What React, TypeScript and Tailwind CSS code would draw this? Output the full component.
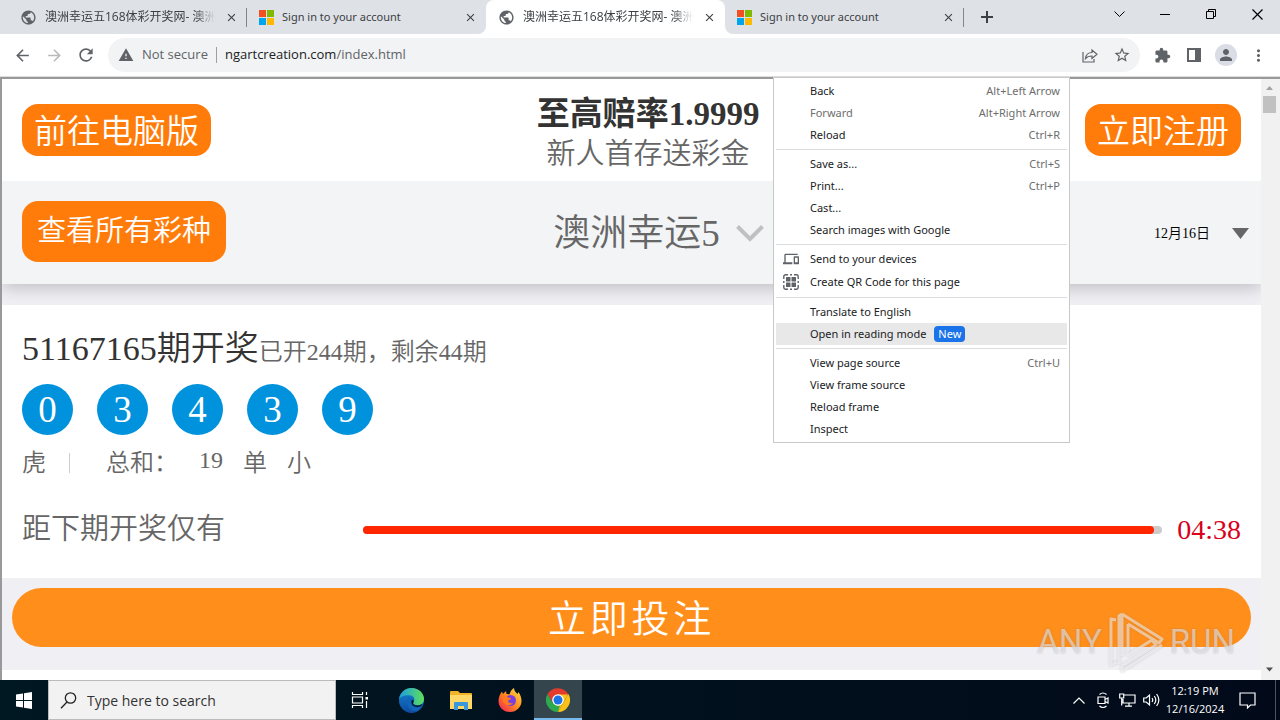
import React from 'react';
import {
  MdArrowBack,
  MdArrowForward,
  MdClose,
  MdDevices,
  MdExtension,
  MdMoreVert,
  MdPerson,
  MdPublic,
  MdRefresh,
  MdStarBorder,
  MdWarning,
} from 'react-icons/md';

type MenuItem = {
  label: string;
  shortcut?: string;
  icon?: React.ReactNode;
  disabled?: boolean;
  active?: boolean;
  badge?: string;
  tall?: boolean;
};

const MicrosoftLogo = () => (
  <svg width="15" height="15" viewBox="0 0 15 15" className="shrink-0">
    <rect width="7" height="7" fill="#f25022" />
    <rect x="8" width="7" height="7" fill="#7fba00" />
    <rect y="8" width="7" height="7" fill="#00a4ef" />
    <rect x="8" y="8" width="7" height="7" fill="#ffb900" />
  </svg>
);

const QrIcon = () => (
  <svg width="16" height="16" viewBox="0 0 16 16" fill="none">
    <path d="M.8 5V2.500A1.700 1.700 0 0 1 2.500.8H5M11 .8h2.500a1.700 1.700 0 0 1 1.700 1.700V5M15.200 11v2.500a1.700 1.700 0 0 1-1.700 1.700H11M5 15.200H2.500A1.700 1.700 0 0 1 .8 13.500V11M.8 7v2M15.200 7v2M7 .8h2M7 15.200h2" stroke="#5f6368" strokeWidth="1.400" />
    <rect x="3" y="3" width="4.500" height="4.500" rx=".5" fill="#5f6368" />
    <rect x="8.500" y="3" width="4.500" height="4.500" rx=".5" fill="#5f6368" />
    <rect x="3" y="8.500" width="4.500" height="4.500" rx=".5" fill="#5f6368" />
    <rect x="8.500" y="8.500" width="4.500" height="4.500" rx=".5" fill="#5f6368" />
  </svg>
);

const tabs = [
  { title: '澳洲幸运五168体彩开奖网- 澳洲', kind: 'site' },
  { title: 'Sign in to your account', kind: 'ms' },
  { title: '澳洲幸运五168体彩开奖网- 澳洲', kind: 'site', active: true },
  { title: 'Sign in to your account', kind: 'ms' },
];

const menuGroups: MenuItem[][] = [
  [
    { label: 'Back', shortcut: 'Alt+Left Arrow' },
    { label: 'Forward', shortcut: 'Alt+Right Arrow', disabled: true },
    { label: 'Reload', shortcut: 'Ctrl+R' },
  ],
  [
    { label: 'Save as...', shortcut: 'Ctrl+S' },
    { label: 'Print...', shortcut: 'Ctrl+P' },
    { label: 'Cast...' },
    { label: 'Search images with Google' },
  ],
  [
    { label: 'Send to your devices', icon: <MdDevices size={16} /> },
    { label: 'Create QR Code for this page', icon: <QrIcon />, tall: true },
  ],
  [
    { label: 'Translate to English' },
    { label: 'Open in reading mode', active: true, badge: 'New' },
  ],
  [
    { label: 'View page source', shortcut: 'Ctrl+U' },
    { label: 'View frame source' },
    { label: 'Reload frame' },
    { label: 'Inspect' },
  ],
];

const balls = [0, 3, 4, 3, 9];

const TabStrip = () => (
  <div className="flex h-[34px] shrink-0 bg-[#dee1e6] pl-2">
    {tabs.map((tab, i) => (
      <div
        key={i}
        className={`relative flex w-[239px] min-w-0 items-center pl-3 pr-2 ${tab.active ? 'rounded-t-lg bg-white' : ''}`}
      >
        {tab.kind === 'site' ? <MdPublic size={17} className="shrink-0 text-[#5f6368]" /> : <MicrosoftLogo />}
        <button
          className={`ml-2 h-6 min-w-0 flex-1 whitespace-nowrap text-left text-[#3c4043] ${tab.kind === 'site' ? 'text-xs [mask-image:linear-gradient(to_right,black_88%,transparent)]' : "font-['Noto_Sans',sans-serif] text-[11px]"}`}
        >
          {tab.title}
        </button>
        <button aria-label="Close tab" className="ml-2 flex size-4 shrink-0 items-center justify-center text-[#3c4043]">
          <MdClose size={13} />
        </button>
        {(i === 0 || i === 3) && <span className="absolute right-0 top-2 h-[19px] w-px bg-[#80868b]" />}
        {tab.active && (
          <>
            <svg width="8" height="8" className="absolute -left-2 bottom-0">
              <path d="M8 0v8H0a8 8 0 0 0 8-8z" fill="#fff" />
            </svg>
            <svg width="8" height="8" className="absolute -right-2 bottom-0">
              <path d="M0 0v8h8a8 8 0 0 1-8-8z" fill="#fff" />
            </svg>
          </>
        )}
      </div>
    ))}
    <button aria-label="New tab" className="flex w-[45px] items-center justify-center">
      <svg width="12" height="12" viewBox="0 0 12 12" stroke="#3c4043" strokeWidth="2">
        <path d="M6 0v12M0 6h12" />
      </svg>
    </button>
    <div className="ml-auto flex h-7 text-black">
      <button aria-label="Search tabs" className="flex w-[46px] items-center justify-center">
        <svg width="11" height="7" viewBox="0 0 11 7" fill="none" stroke="currentColor"><path d="M.5.5l5 5 5-5" /></svg>
      </button>
      <button aria-label="Minimize" className="flex w-[46px] items-center justify-center">
        <svg width="10" height="3" viewBox="0 0 10 3" fill="none" stroke="currentColor"><path d="M0 1.500h10" /></svg>
      </button>
      <button aria-label="Restore" className="flex w-[46px] items-center justify-center">
        <svg width="10" height="10" viewBox="0 0 10 10" fill="none" stroke="currentColor"><path d="M.5 2.500h7v7h-7zM2.500 2.500v-2h7v7h-2" /></svg>
      </button>
      <button aria-label="Close" className="flex w-[46px] items-center justify-center">
        <svg width="11" height="11" viewBox="0 0 11 11" fill="none" stroke="currentColor" strokeWidth="1.200"><path d="M.5.5l10 10M10.500.5l-10 10" /></svg>
      </button>
    </div>
  </div>
);

const Toolbar = () => (
  <div className="flex h-[43px] shrink-0 items-center border-b border-[#dcdcdc] bg-white px-1.5 text-[#5f6368]">
    <button aria-label="Go back" className="flex w-8 justify-center"><MdArrowBack size={19} /></button>
    <button aria-label="Go forward" className="flex w-8 justify-center text-[#bababa]"><MdArrowForward size={19} /></button>
    <button aria-label="Reload page" className="flex w-8 justify-center"><MdRefresh size={20} /></button>
    <div className="ml-1.5 flex h-[34px] flex-1 items-center rounded-full bg-[#f1f3f4] pl-2.5 pr-0.5 text-[13px]">
      <MdWarning size={16} />
      <span className="ml-2">Not secure</span>
      <span className="mx-2 h-4 w-px bg-[#9aa0a6]" />
      <a href="#page" className="flex-1"><span className="text-[#202124]">ngartcreation.com</span>/index.html</a>
      <button aria-label="Share this page" className="flex w-8 justify-center">
        <svg width="16" height="15" viewBox="0 0 16 15" fill="none" stroke="currentColor" strokeWidth="1.200">
          <path d="M1 4v10h11v-3M3.500 10.500c.5-4 3-6 6.500-6V2l5 4.300-5 4.200V8c-3 0-5 .8-6.500 2.500z" />
        </svg>
      </button>
      <button aria-label="Bookmark this tab" className="flex w-8 justify-center"><MdStarBorder size={18} /></button>
    </div>
    <button aria-label="Extensions" className="ml-1.5 flex w-8 justify-center"><MdExtension size={17} /></button>
    <button aria-label="Side panel" className="flex w-8 justify-center">
      <svg width="14" height="14" viewBox="0 0 14 14"><path d="M0 0h14v14H0zM2 2v10h6V2z" fill="currentColor" fillRule="evenodd" /></svg>
    </button>
    <button aria-label="Profile" className="flex w-8 justify-center">
      <span className="flex size-[22px] items-center justify-center rounded-full bg-[#dadce6]"><MdPerson size={18} /></span>
    </button>
    <button aria-label="Menu" className="flex w-8 justify-center"><MdMoreVert size={19} /></button>
  </div>
);

const ContextMenu = () => (
  <div className="absolute -top-0.5 left-[771px] z-20 w-[297px] border border-[#c8c8c8] bg-white p-0.5 font-['Noto_Sans',sans-serif] text-[11px] text-[#202124]">
    {menuGroups.map((group, i) => (
      <div key={i}>
        {i > 0 && <div className="my-[3px] h-px bg-[#dadce0]" />}
        {group.map((item) => (
          <button
            key={item.label}
            className={`flex w-full items-center pr-[7px] ${item.tall ? 'h-6' : 'h-[22px]'} ${item.active ? 'bg-[#e8e8e8]' : ''} ${item.disabled ? 'text-[#6d6d6d]' : ''}`}
          >
            <span className="flex w-[34px] items-center pl-[7px] text-[#5f6368]">{item.icon}</span>
            <span>{item.label}</span>
            {item.badge && <span className="ml-2 rounded-sm bg-[#1a73e8] px-1 leading-4 text-white">{item.badge}</span>}
            {item.shortcut && <span className="ml-auto text-[#6d6d6d]">{item.shortcut}</span>}
          </button>
        ))}
      </div>
    ))}
  </div>
);

const Watermark = () => (
  <div className="pointer-events-none absolute bottom-1.5 right-[45px] z-10 flex items-center gap-[5px] font-['Roboto',sans-serif] text-[33px] leading-[64px] text-white/50 [text-shadow:0_0_2px_rgba(120,110,120,0.5)]">
    <span>ANY</span>
    <svg width="58" height="64" viewBox="0 0 58 64" fill="none" stroke="#fff" strokeOpacity=".5" strokeWidth="3" strokeLinejoin="round" className="drop-shadow-[0_0_1px_rgba(120,110,120,0.6)]">
      <path d="M9 10L4 9v46l6-3M15 4v42M15 4l40 25-3 4-31-19M15 4l-3 2v48M21 14v31l24-15 4 5-34 21M15 56v5l40-26" />
    </svg>
    <span>RUN</span>
  </div>
);

const LotteryPage = () => (
  <div id="page" className="relative flex min-h-0 flex-1 border-l-2 border-t-2 border-[#999] bg-white">
    <main className="min-w-0 flex-1 overflow-hidden bg-[#efeff4] font-['Liberation_Serif','Noto_Sans_CJK_SC',serif] font-[350] text-[#666]">
      <header className="relative z-10 flex h-[102px] items-center justify-between bg-white px-5">
        <button className="h-[52px] rounded-2xl bg-[#ff7c0b] px-3 pt-1 text-[33px] leading-[48px] text-white">前往电脑版</button>
        <div className="pt-2 text-center">
          <div className="text-[33px] font-bold leading-10 text-[#333]">至高赔率1.9999</div>
          <div className="text-[29px] leading-10">新人首存送彩金</div>
        </div>
        <button className="h-[52px] rounded-2xl bg-[#ff7c0b] px-3 pt-1 text-[33px] leading-[48px] text-white">立即注册</button>
      </header>
      <div className="relative flex h-[103px] items-center justify-between bg-[#f2f4f6] pb-0.5 pl-5 pr-3 shadow-[0_4px_16px_rgba(0,0,0,0.2)]">
        <button className="h-[61px] rounded-2xl bg-[#ff7c0b] px-[15px] text-[29px] leading-[61px] text-white">查看所有彩种</button>
        <button className="flex items-center gap-4 pt-1 text-[37px] leading-[60px]">
          <span>澳洲幸运5</span>
          <svg width="28" height="17" viewBox="0 0 28 17" fill="none" stroke="#c0c0c0" strokeWidth="4"><path d="M1.500 1.500L14 14 26.500 1.500" /></svg>
        </button>
        <div className="relative flex w-[158px] items-center justify-end pt-1 text-black">
          <select aria-label="日期" className="w-[95px] appearance-none text-sm">
            <option>12月16日</option>
          </select>
          <svg width="17" height="11" viewBox="0 0 17 11" className="pointer-events-none absolute right-0"><path d="M0 0h17L8.500 11z" fill="#666" /></svg>
        </div>
      </div>
      <section className="mt-[21px] h-[273px] bg-white px-5 pt-5">
        <div className="flex h-[50px] items-baseline leading-[48px]">
          <span className="text-[34px] text-[#333]">51167165期开奖</span>
          <span className="text-2xl leading-[48px]">已开244期，剩余44期</span>
        </div>
        <div className="mt-[9px] flex gap-6">
          {balls.map((n, i) => (
            <span key={i} className="flex size-[51px] items-center justify-center rounded-full bg-[#0092dd] text-[37px] leading-[51px] text-white">{n}</span>
          ))}
        </div>
        <div className="mt-2.5 flex h-9 items-center text-2xl">
          <span>虎</span>
          <span className="ml-[23px] h-5 w-px bg-[#ccc]" />
          <span className="ml-9 w-[93px]">总和：</span>
          <span className="w-11 pb-1.5">19</span>
          <span className="w-11">单</span>
          <span>小</span>
        </div>
        <div className="mt-[26px] flex h-[46px] items-center text-[29px]">
          <span className="w-[341px]">距下期开奖仅有</span>
          <div role="progressbar" aria-valuenow={99} className="h-2 flex-1 rounded-full bg-[#ccc]">
            <div className="h-2 w-[99%] rounded-full bg-[#ff2600]" />
          </div>
          <span className="ml-[15px] text-[28px] text-[#d9001b]">04:38</span>
        </div>
      </section>
      <div className="bg-[#efeff4] p-2.5 pb-[23px]">
        <button className="h-[59px] w-full rounded-full bg-[#ff8f1a] pt-1 text-[38px] leading-[55px] tracking-widest text-white">立即投注</button>
      </div>
      <div className="h-3 bg-white" />
    </main>
    <div className="flex w-[19px] shrink-0 flex-col items-center bg-[#f1f1f1] pr-0.5">
      <svg width="17" height="17" viewBox="0 0 17 17"><path d="M5 11l3.500-4L12 11z" fill="#a3a3a3" /></svg>
      <div className="h-[17px] w-[13px] bg-[#c1c1c1]" />
      <svg width="17" height="19" viewBox="0 0 17 19" className="mt-auto"><path d="M5 6.500h7L8.500 10.500z" fill="#505050" /></svg>
    </div>
    <Watermark />
    <ContextMenu />
  </div>
);

const Taskbar = () => (
  <div className="flex h-10 shrink-0 bg-linear-to-r from-[#001821] to-[#020a1a] text-white">
    <button aria-label="Start" className="flex w-12 items-center justify-center">
      <svg width="16" height="17" viewBox="0 0 16 17" fill="#fff"><path d="M0 2.500l7-1V8H0zM8 1.300L16 0v8H8zM0 9h7v6.500l-7-1zM8 9h8v8l-8-1.300z" /></svg>
    </button>
    <label className="flex w-72 items-center border border-[#bbb] bg-[#f2f2f2] pl-[11px]">
      <svg width="17" height="17" viewBox="0 0 17 17" fill="none" stroke="#222" strokeWidth="1.300" className="shrink-0"><circle cx="10.500" cy="6" r="5.200" /><path d="M7 10l-6 6.300" /></svg>
      <input aria-label="Search" placeholder="Type here to search" className="ml-2.5 w-full min-w-0 bg-transparent text-[14px] outline-none placeholder:text-[#333]" />
    </label>
    <button aria-label="Task View" className="mr-[3px] flex w-12 items-center justify-center">
      <svg width="18" height="16" viewBox="0 0 18 16" fill="none" stroke="#fff" strokeWidth="1.200"><path d="M1.500 0v2.500h10V0M1.500 5h10v6h-10zM1.500 16v-2.500h10V16M15.500 0v3M15.500 9v7" /><path d="M14.500 5h2.500v2.500h-2.500z" fill="#fff" stroke="none" /></svg>
    </button>
    <button aria-label="Microsoft Edge" className="flex w-[49px] items-center justify-center">
      <svg width="25" height="25" viewBox="0 0 24 24">
        <defs>
          <linearGradient id="edgeTop" x1="0" x2="1"><stop stopColor="#1b9de2" /><stop offset="1" stopColor="#5fe05a" /></linearGradient>
          <linearGradient id="edgeBody" x1="0" y1="0" x2="0" y2="1"><stop stopColor="#1686d0" /><stop offset="1" stopColor="#0c4aa0" /></linearGradient>
        </defs>
        <circle cx="12" cy="12" r="12" fill="url(#edgeBody)" />
        <path d="M0 11C1 4 6 0 12 0c7 0 12 5 12 10.500 0 4-3 6-6 6-3.500 0-5-1.500-4-3 1.500-2 1-6-4-6.500C5.500 6.700 1.500 8 0 11z" fill="url(#edgeTop)" />
        <path d="M9 9c-3 4-1 11 5 13 3 .5 6-1 8-4-2 1-6 1.500-9-1-2.500-2-3-5-2-7z" fill="#1264b8" />
        <path d="M14 13.500c-1.500 2 1 4 4.500 3.200l4-1.200c-1 2-4 3-6.500 2.500-3.500-.8-5-4-3.500-7 1 .5 2 1.500 1.500 2.500z" fill="#001723" />
      </svg>
    </button>
    <button aria-label="File Explorer" className="flex w-[49px] items-center justify-center">
      <svg width="22" height="19" viewBox="0 0 22 19"><path d="M0 1a1 1 0 0 1 1-1h7l2 2h11a1 1 0 0 1 1 1v15H0z" fill="#f0b429" /><path d="M0 4h22v14H0z" fill="#ffd867" /><path d="M4 19v-7a1 1 0 0 1 1-1h12a1 1 0 0 1 1 1v7h-4v-4H8v4z" fill="#3a97dc" /></svg>
    </button>
    <button aria-label="Firefox" className="flex w-[49px] items-center justify-center">
      <svg width="24" height="24" viewBox="0 0 24 24">
        <defs><linearGradient id="fox" x1="1" y1="0" x2="0" y2="1"><stop stopColor="#ffe14a" /><stop offset=".5" stopColor="#ff8a1e" /><stop offset="1" stopColor="#f4155e" /></linearGradient></defs>
        <path d="M12 24C5 24 .5 19 .5 13 .5 9 2 6 4 3.500L5 6l3-3 .5 3 3 .3C12.500 3 14 1 16 0c0 3 2 4 3.500 6l1-2c2 3 3 6 3 9 0 6-5 11-11.500 11z" fill="url(#fox)" />
        <circle cx="12.500" cy="12.500" r="5.500" fill="#7b3fe0" />
        <path d="M4 8c3-1 5 0 6 1.500l3 .5c0 1.500-2 2-3 2.500 0 2 2 3.500 5 2.500-2 3-7 3-9 0S4.500 11 4 8z" fill="#ff7a1c" />
      </svg>
    </button>
    <button aria-label="Google Chrome" className="flex w-12 items-center justify-center border-b-2 border-[#76b9ed] bg-[#34454d] pt-0.5">
      <svg width="24" height="24" viewBox="0 0 24 24">
        <path d="M12 6h10.400L17.200 15 12 24l-5.200-9z" fill="#fbc116" />
        <path d="M22.400 6A12 12 0 0 1 12 24l5.200-9z" fill="#fbc116" />
        <path d="M1.600 6l5.200 9 5.200 3 2-.5L12 24A12 12 0 0 1 1.600 6z" fill="#2da94f" />
        <path d="M12 6.500h10.400A12 12 0 0 0 1.600 6L7 15z" fill="#e33b2e" />
        <circle cx="12" cy="12" r="5.800" fill="#fff" />
        <circle cx="12" cy="12" r="4.500" fill="#1a73e8" />
      </svg>
    </button>
    <div className="ml-auto flex items-center">
      <button aria-label="Show hidden icons" className="flex w-6 justify-center">
        <svg width="12" height="7" viewBox="0 0 12 7" fill="none" stroke="#fff" strokeWidth="1.200"><path d="M.5 6.500L6 1l5.500 5.500" /></svg>
      </button>
      <button aria-label="Meet Now" className="flex w-6 justify-center">
        <svg width="12" height="16" viewBox="0 0 12 16" fill="none" stroke="#fff" strokeWidth="1.200"><path d="M1 5h7v6.500H1zM8 7.500L11 6v5L8 9.500M2.500 2.500Q6-.5 9.500 2.500M2.500 14Q6 17 9.500 14" /></svg>
      </button>
      <button aria-label="Network" className="flex w-6 justify-center">
        <svg width="17" height="14" viewBox="0 0 17 14" fill="none" stroke="#fff" strokeWidth="1.200"><path d="M5 2h11v8H4V6M10 10v3M6 13.200h7M.7 1h4v4h-4zM2.700 5v7.500" /></svg>
      </button>
      <button aria-label="Volume" className="flex w-6 justify-center">
        <svg width="17" height="14" viewBox="0 0 17 14" fill="none" stroke="#fff" strokeWidth="1.200"><path d="M.7 5v4h2.500L6.500 12V2L3.200 5zM9 5q1.500 2 0 4M11.300 3q3 4 0 8M13.600 1q4.500 6 0 12" /></svg>
      </button>
      <button className="w-16 text-center text-[11px] leading-[18px]">
        <span className="block">12:19 PM</span>
        <span className="block">12/16/2024</span>
      </button>
      <button aria-label="Notifications" className="flex w-10 justify-center">
        <svg width="17" height="17" viewBox="0 0 17 17" fill="none" stroke="#fff" strokeWidth="1.200"><path d="M1 1h15v12h-4.500l-3 3v-3H1z" /></svg>
      </button>
      <span className="ml-2 mr-1 h-10 w-px bg-[#4a5560]" />
    </div>
  </div>
);

export default function App() {
  return (
    <div className="flex h-screen flex-col overflow-hidden bg-white font-['Open_Sans','Noto_Sans_CJK_SC',sans-serif]">
      <TabStrip />
      <Toolbar />
      <LotteryPage />
      <Taskbar />
    </div>
  );
}
